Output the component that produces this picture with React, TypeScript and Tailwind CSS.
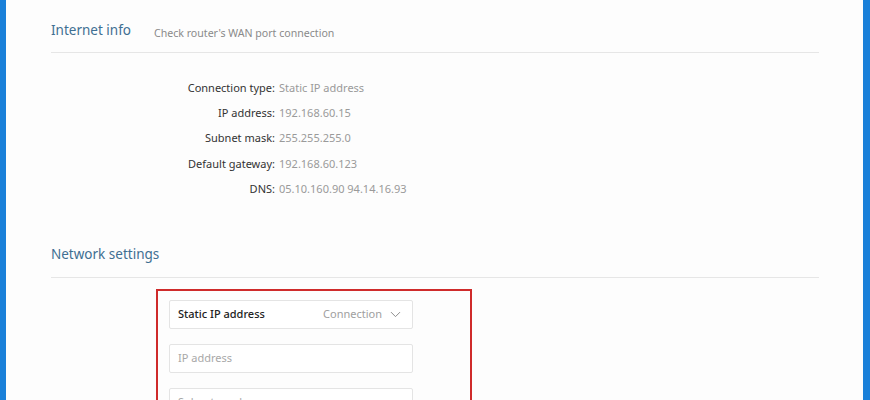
import { ChevronDown } from "lucide-react";

const info: [string, string][] = [
  ["Connection type:", "Static IP address"],
  ["IP address:", "192.168.60.15"],
  ["Subnet mask:", "255.255.255.0"],
  ["Default gateway:", "192.168.60.123"],
  ["DNS:", "05.10.160.90 94.14.16.93"],
];

function Field({ children }: { children: React.ReactNode }) {
  return (
    <div className="w-[244px] h-[29px] shrink-0 border border-[#e4e4e4] rounded-[2px] bg-white flex items-center px-[8px] text-[11px]">
      {children}
    </div>
  );
}

export default function App() {
  return (
    <div className="h-[400px] w-[870px] flex overflow-hidden bg-[#fdfdfd] font-['Noto_Sans',sans-serif]">
      <div className="w-[6px] bg-[#1a80d9] shrink-0" />
      <div className="flex-1 pl-[45px] pr-[44px]">
        {/* Internet info */}
        <div className="pt-[20px]">
          <div className="flex items-start gap-[23px] h-[33px] border-b border-[#e6e6e6]">
            <h2 className="text-[13.5px] leading-[20px] text-[#3f6f92]">Internet info</h2>
            <span className="text-[10.6px] leading-[20px] mt-[3px] text-[#8a8a8a]">Check router's WAN port connection</span>
          </div>
          <div className="pt-[26px] flex flex-col gap-[7.3px]">
            {info.map(([k, v]) => (
              <div key={k} className="flex items-center h-[18px] text-[11px]">
                <span className="w-[224px] text-right text-[#333]">{k}</span>
                <span className="pl-[4px] text-[#9a9a9a]">{v}</span>
              </div>
            ))}
          </div>
        </div>

        {/* Network settings */}
        <div className="pt-[46px]">
          <div className="h-[34px] border-b border-[#e6e6e6]">
            <h2 className="text-[13.5px] leading-[20px] text-[#3f6f92]">Network settings</h2>
          </div>
          <div className="ml-[105px] mt-[11px] w-[316px] h-[200px] border-2 border-[#cf2b2b] pt-[9px] pl-[11px] flex flex-col gap-[15px]">
            <Field>
              <span className="text-[#222] font-medium flex-1">Static IP address</span>
              <span className="text-[#a0a0a0]">Connection</span>
              <ChevronDown className="ml-[5px] w-[17px] h-[17px] text-[#8c8c8c]" strokeWidth={1.4} />
            </Field>
            <Field>
              <span className="text-[#a8a8a8]">IP address</span>
            </Field>
            <Field>
              <span className="text-[#a8a8a8]">Subnet mask</span>
            </Field>
          </div>
        </div>
      </div>
      <div className="w-[7px] bg-[#1a80d9] shrink-0" />
    </div>
  );
}
